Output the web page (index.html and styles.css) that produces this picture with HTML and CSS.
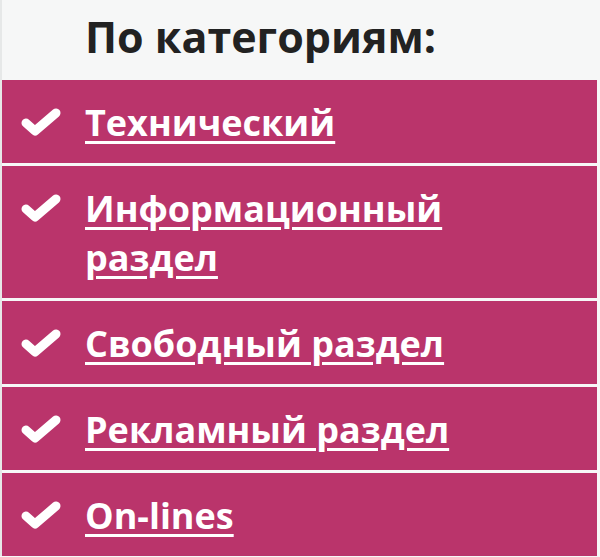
FILE: index.html
```html
<!DOCTYPE html>
<html lang="ru">
<head>
    <meta charset="UTF-8">
    <meta name="viewport" content="width=device-width, initial-scale=1.0">
    <title>По категориям</title>
    <link rel="stylesheet" href="styles.css">
</head>
<body>

    <!-- Categories widget -->
    <div class="widget">
        <h2 class="widget-title">По категориям:</h2>

        <ul class="cat-list">
            <li class="cat-item">
                <svg class="check" viewBox="0 0 42 30"><path d="M6 16 L15 24 L36 6"/></svg>
                <a href="#">Технический</a>
            </li>
            <li class="cat-item">
                <svg class="check" viewBox="0 0 42 30"><path d="M6 16 L15 24 L36 6"/></svg>
                <a href="#">Информационный раздел</a>
            </li>
            <li class="cat-item">
                <svg class="check" viewBox="0 0 42 30"><path d="M6 16 L15 24 L36 6"/></svg>
                <a href="#">Свободный раздел</a>
            </li>
            <li class="cat-item">
                <svg class="check" viewBox="0 0 42 30"><path d="M6 16 L15 24 L36 6"/></svg>
                <a href="#">Рекламный раздел</a>
            </li>
            <li class="cat-item">
                <svg class="check" viewBox="0 0 42 30"><path d="M6 16 L15 24 L36 6"/></svg>
                <a href="#">On-lines</a>
            </li>
        </ul>
    </div>

</body>
</html>
```

FILE: styles.css
```css
/* General */
body {
    margin: 0;
    padding: 0;
    background-color: #f6f7f7;
    font-family: "Open Sans", "Liberation Sans", sans-serif;
}

.widget {
    border-left: 2px solid #e6e8e8;
    padding-right: 3px;
}

/* Title */
.widget-title {
    margin: 0;
    height: 80px;
    padding-left: 83px;
    font-size: 43px;
    line-height: 73px;
    font-weight: 700;
    color: #222222;
}

/* List */
.cat-list {
    list-style: none;
    margin: 0;
    padding: 0;
    display: flex;
    flex-direction: column;
    gap: 3px;
}

.cat-item {
    display: flex;
    align-items: flex-start;
    background-color: #ba346b;
    padding: 18px 20px 16px 18px;
}

.check {
    flex: none;
    width: 42px;
    height: 30px;
    margin-top: 9px;
    margin-right: 23px;
    fill: none;
    stroke: #ffffff;
    stroke-width: 9;
    stroke-linecap: round;
    stroke-linejoin: round;
}

.cat-item a {
    color: #ffffff;
    font-size: 36px;
    line-height: 49px;
    font-weight: 700;
    text-decoration: underline;
    text-decoration-thickness: 3px;
    text-underline-offset: 5px;
    max-width: 400px;
}
```
